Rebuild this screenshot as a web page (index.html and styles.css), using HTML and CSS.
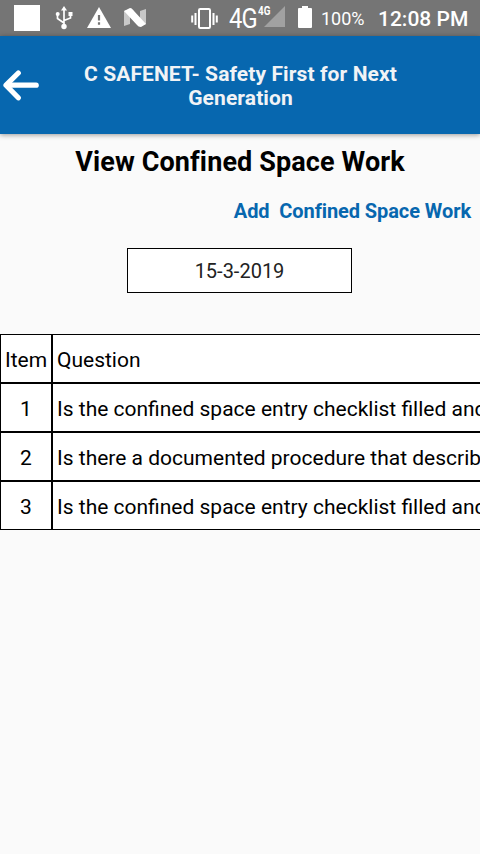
FILE: index.html
```html
<!DOCTYPE html>
<html lang="en">
<head>
<meta charset="utf-8">
<title>View Confined Space Work</title>
<link rel="stylesheet" href="styles.css">
</head>
<body>
<div class="status">
  <span class="block"></span>
  <svg class="usb" width="18" height="24" viewBox="0 0 18 24" fill="none" stroke="#fff" stroke-width="1.7"><path d="M9 3v17M2.500 8v4.500L9 17M15.500 8v4L9 14.500"/><g fill="#fff" stroke="none"><path d="M9 0l3 4.500H6z"/><circle cx="2.700" cy="8" r="2"/><path d="M13.500 6h4v4h-4z"/><circle cx="9" cy="20.500" r="2.700"/></g></svg>
  <svg class="warn" width="24" height="21" viewBox="0 0 24 21"><path fill="#fff" d="M12 0L24 21H0z"/><path fill="#757575" d="M10.900 8h2.200v5.500h-2.200zM10.900 15.300h2.200v2.400h-2.200z"/></svg>
  <svg class="nougat" width="23" height="19" viewBox="0 0 23 19"><path fill="#c8c8c8" d="M0 3l6-2v15l-6 2zM16 3l6-2v15l-6 2z"/><path fill="#fff" d="M0 3l6-3c2 0 3 2 4 3l12 13-5 3c-2 0-3-1-4-2z"/></svg>
  <svg class="vibrate" width="28" height="22" viewBox="0 0 28 22" fill="none" stroke="#fff" stroke-width="2"><rect x="8" y="1" width="11" height="19" rx="1.200"/><path d="M4.500 5v12M1.200 7.500v7M22.500 5v12M25.800 7.500v7" stroke-width="2"/></svg>
  <span class="net">4G</span>
  <span class="net-small">4G</span>
  <svg class="signal" width="21" height="21" viewBox="0 0 21 21"><path fill="#a1a1a1" d="M21 0v21H0z"/></svg>
  <svg class="battery" width="14" height="22" viewBox="0 0 14 22"><path fill="#fff" d="M4 0h6v2h3a1 1 0 0 1 1 1v18a1 1 0 0 1-1 1H1a1 1 0 0 1-1-1V3a1 1 0 0 1 1-1h3z"/></svg>
  <span class="percent">100%</span>
  <span class="clock">12:08 PM</span>
</div>
<header class="bar">
  <svg class="back" width="36" height="31" viewBox="0 0 36 31" fill="none" stroke="#fff" stroke-linecap="round" stroke-linejoin="round"><path stroke-width="5.200" d="M15.300 3L3 15.200 15.300 27.800"/><path stroke-width="5.200" d="M5 15.200h28.200"/></svg>
  <div class="bar-title">C SAFENET- Safety First for Next<br>Generation</div>
</header>
<main>
  <h1>View Confined Space Work</h1>
  <a class="add">Add&nbsp; Confined Space Work</a>
  <div class="date">15-3-2019</div>
  <div class="table">
    <div class="row"><div class="item">Item</div><div class="question">Question</div></div>
    <div class="row"><div class="item">1</div><div class="question">Is the confined space entry checklist filled and</div></div>
    <div class="row"><div class="item">2</div><div class="question">Is there a documented procedure that describes</div></div>
    <div class="row"><div class="item">3</div><div class="question">Is the confined space entry checklist filled and</div></div>
  </div>
</main>
</body>
</html>
```
FILE: styles.css
```css
* { box-sizing: border-box; }
body {
  margin: 0;
  height: 854px;
  overflow: hidden;
  background: #fafafa;
  color: #000;
  font-family: Roboto, sans-serif;
}
.status {
  display: flex;
  align-items: flex-start;
  height: 36px;
  background: #757575;
  color: #fff;
  white-space: nowrap;
}
.status > * { flex: none; }
.block { width: 26px; height: 26px; margin: 5px 0 0 14px; background: #fff; }
.usb { margin: 6px 0 0 15px; }
.warn { margin: 7px 0 0 14px; }
.nougat { margin: 8px 0 0 13px; }
.vibrate { margin: 8px 0 0 44px; }
.net {
  width: 29px;
  margin: 5px 0 0 10px;
  font-size: 27px;
  line-height: 28px;
  letter-spacing: -1px;
  transform: scaleX(.88);
  transform-origin: left;
}
.net-small {
  width: 14px;
  margin-top: 5px;
  font-size: 12px;
  line-height: 13px;
  font-weight: 700;
  transform: scaleX(.82);
  transform-origin: left;
}
.signal { margin: 6px 0 0 -8px; }
.battery { margin: 6px 0 0 13px; }
.percent { width: 45px; margin: 8px 0 0 9px; font-size: 18px; line-height: 22px; }
.clock { margin: 7px 0 0 12px; font-size: 21px; line-height: 24px; font-weight: 500; }
.bar {
  position: relative;
  display: flex;
  align-items: flex-start;
  height: 98px;
  padding-left: 3px;
  background: #0767af;
  box-shadow: 0 1px 5px rgba(0, 0, 0, .4);
}
.back { flex: none; margin-top: 34px; }
.bar-title {
  flex: 1;
  margin: 26px 38px 0 0;
  color: #f1f3f6;
  font-size: 21px;
  line-height: 24px;
  font-weight: 700;
  letter-spacing: .1px;
  text-align: center;
}
main { display: flex; flex-direction: column; }
h1 {
  margin: 11px 0 0;
  font-size: 27px;
  line-height: 34px;
  font-weight: 700;
  letter-spacing: .12px;
  text-align: center;
}
.add {
  align-self: flex-end;
  margin: 20px 9px 0 0;
  color: #0767af;
  font-size: 20px;
  line-height: 24px;
  font-weight: 700;
  letter-spacing: -.08px;
}
.date {
  width: 225px;
  height: 45px;
  margin: 25px 0 0 127px;
  border: 1px solid #000;
  background: #fff;
  color: #222;
  font-size: 20px;
  line-height: 44px;
  text-align: center;
}
.table { margin-top: 41px; font-size: 21px; line-height: 51px; white-space: nowrap; overflow: hidden; }
.row { display: flex; height: 49px; }
.item, .question { flex: none; height: 49px; border: 1px solid #000; background: #fff; }
.item { width: 52px; text-align: center; }
.question { width: 700px; padding-left: 4px; }
```
